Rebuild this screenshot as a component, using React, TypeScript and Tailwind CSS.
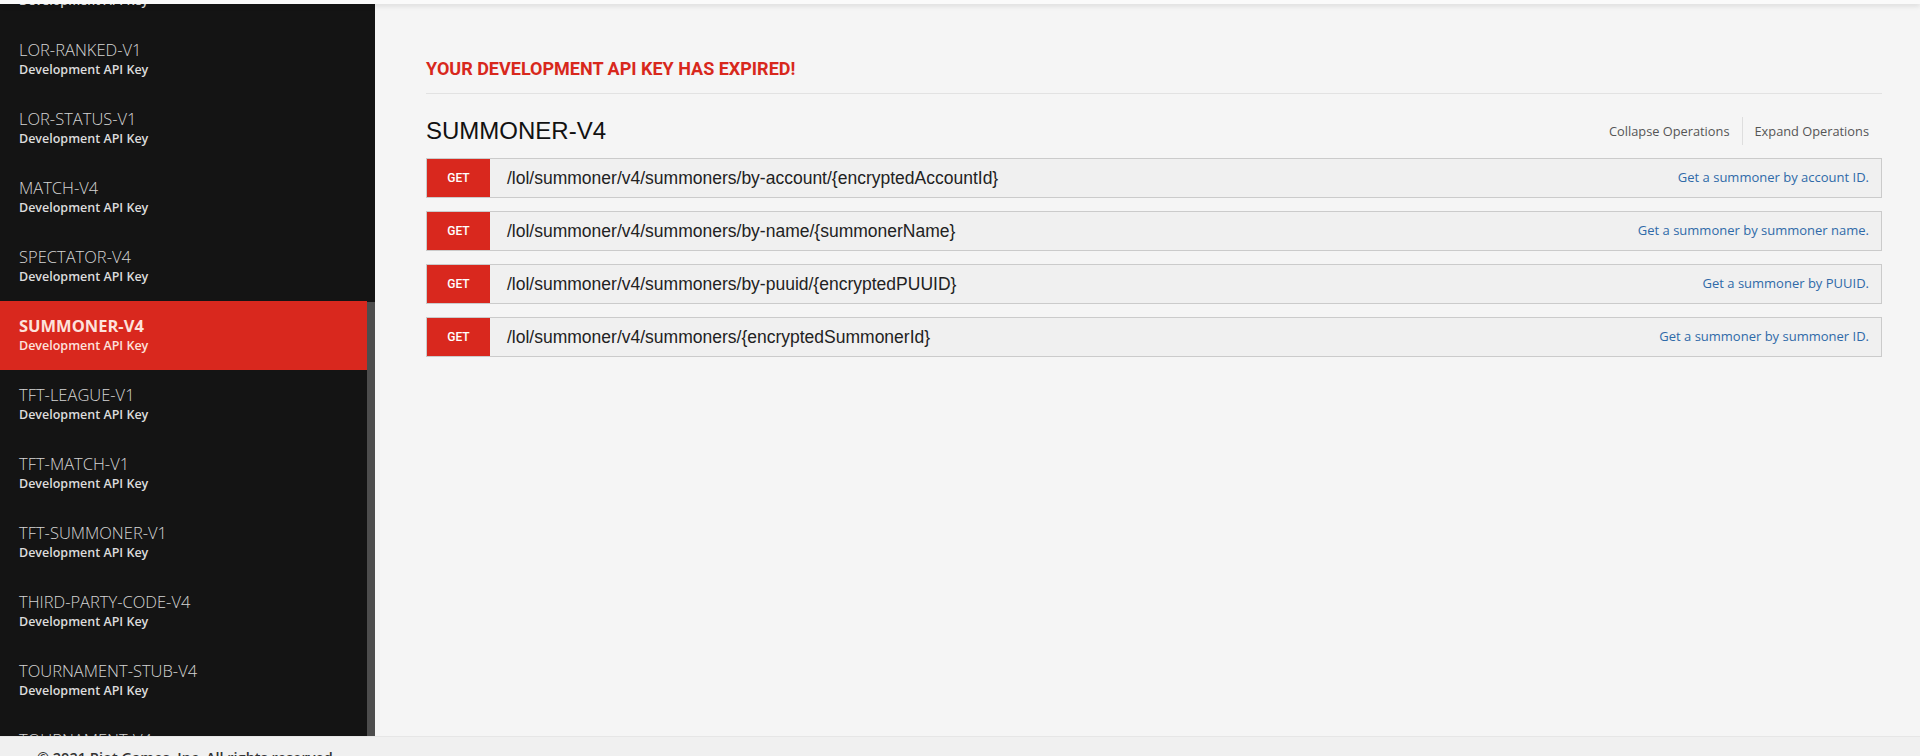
import React from "react";

const items = [
  "LOR-MATCH-V1",
  "LOR-RANKED-V1",
  "LOR-STATUS-V1",
  "MATCH-V4",
  "SPECTATOR-V4",
  "SUMMONER-V4",
  "TFT-LEAGUE-V1",
  "TFT-MATCH-V1",
  "TFT-SUMMONER-V1",
  "THIRD-PARTY-CODE-V4",
  "TOURNAMENT-STUB-V4",
  "TOURNAMENT-V4",
];

const ops = [
  { path: "/lol/summoner/v4/summoners/by-account/{encryptedAccountId}", desc: "Get a summoner by account ID." },
  { path: "/lol/summoner/v4/summoners/by-name/{summonerName}", desc: "Get a summoner by summoner name." },
  { path: "/lol/summoner/v4/summoners/by-puuid/{encryptedPUUID}", desc: "Get a summoner by PUUID." },
  { path: "/lol/summoner/v4/summoners/{encryptedSummonerId}", desc: "Get a summoner by summoner ID." },
];

export default function App() {
  return (
    <div className="h-[756px] w-[1920px] overflow-hidden flex flex-col bg-[#f5f5f5] font-['Open_Sans',sans-serif]">
      <div className="h-[4px] shrink-0 bg-[#fafafa] shadow-[0_2px_5px_rgba(0,0,0,0.12)] relative z-10" />
      <div className="flex h-[732px] shrink-0">
        <aside className="flex w-[375px] shrink-0 bg-[#141414] overflow-hidden">
          <nav className="w-[367px] shrink-0 flex flex-col -mt-[48px]">
            {items.map((name) => {
              const active = name === "SUMMONER-V4";
              return (
                <div
                  key={name}
                  className={
                    active
                      ? "h-[69px] shrink-0 pl-[19px] pt-[13px] bg-[#d9281e] flex flex-col"
                      : "h-[69px] shrink-0 pl-[19px] pt-[13px] flex flex-col"
                  }
                >
                  <span
                    className={
                      active
                        ? "text-[16.5px] leading-[24px] font-bold text-[#fde2dc]"
                        : "text-[16.5px] leading-[24px] font-light text-[#d4d4d4]"
                    }
                  >
                    {name}
                  </span>
                  <span
                    className={
                      active
                        ? "text-[12.5px] leading-[16px] font-semibold text-[#fde2dc]"
                        : "text-[12.5px] leading-[16px] font-semibold text-[#dcdcdc]"
                    }
                  >
                    Development API Key
                  </span>
                </div>
              );
            })}
          </nav>
          <div className="w-[8px] shrink-0 flex flex-col">
            <div className="h-[298px] shrink-0 bg-[#141414]" />
            <div className="flex-1 bg-[#4d4d4d]" />
          </div>
        </aside>
        <main className="flex-1 pl-[51px] pr-[38px] pt-[53px]">
          <div className="border-b border-[#e2e2e2] pb-[12px]">
            <h2 className="font-['Roboto',sans-serif] font-bold text-[18px] leading-[24px] text-[#d8281c]">
              YOUR DEVELOPMENT API KEY HAS EXPIRED!
            </h2>
          </div>
          <div className="flex items-center justify-between mt-[23px]">
            <h1 className="font-['Liberation_Sans',Arial,sans-serif] text-[24px] leading-[28px] text-[#111]">
              SUMMONER-V4
            </h1>
            <div className="flex items-center text-[12.8px] text-[#555] mr-[13px]">
              <span className="pr-[12px] border-r border-[#dedede] leading-[28px]">Collapse Operations</span>
              <span className="pl-[12px] leading-[28px]">Expand Operations</span>
            </div>
          </div>
          <div className="flex flex-col gap-[13px] mt-[13px]">
            {ops.map((op) => (
              <div
                key={op.path}
                className="h-[40px] flex items-stretch border border-[#cbcbcb] bg-[#f0f0f0]"
              >
                <div className="w-[63px] shrink-0 bg-[#d9281e] flex items-center justify-center font-['Roboto',sans-serif] font-medium text-[12px] text-white">
                  GET
                </div>
                <div className="flex-1 flex items-center pl-[17px] font-['Liberation_Sans',Arial,sans-serif] text-[17.5px] text-[#222]">
                  {op.path}
                </div>
                <div className="flex items-center pr-[12px] text-[13px] text-[#2f6aa8]">
                  {op.desc}
                </div>
              </div>
            ))}
          </div>
        </main>
      </div>
      <footer className="flex-1 bg-[#f0f0f0] border-t border-[#e6e6e6] pl-[37px] pt-[11px] relative z-10">
        <span className="block text-[14.5px] leading-[20px] font-semibold text-[#333]">
          © 2021 Riot Games, Inc. All rights reserved.
        </span>
      </footer>
    </div>
  );
}
